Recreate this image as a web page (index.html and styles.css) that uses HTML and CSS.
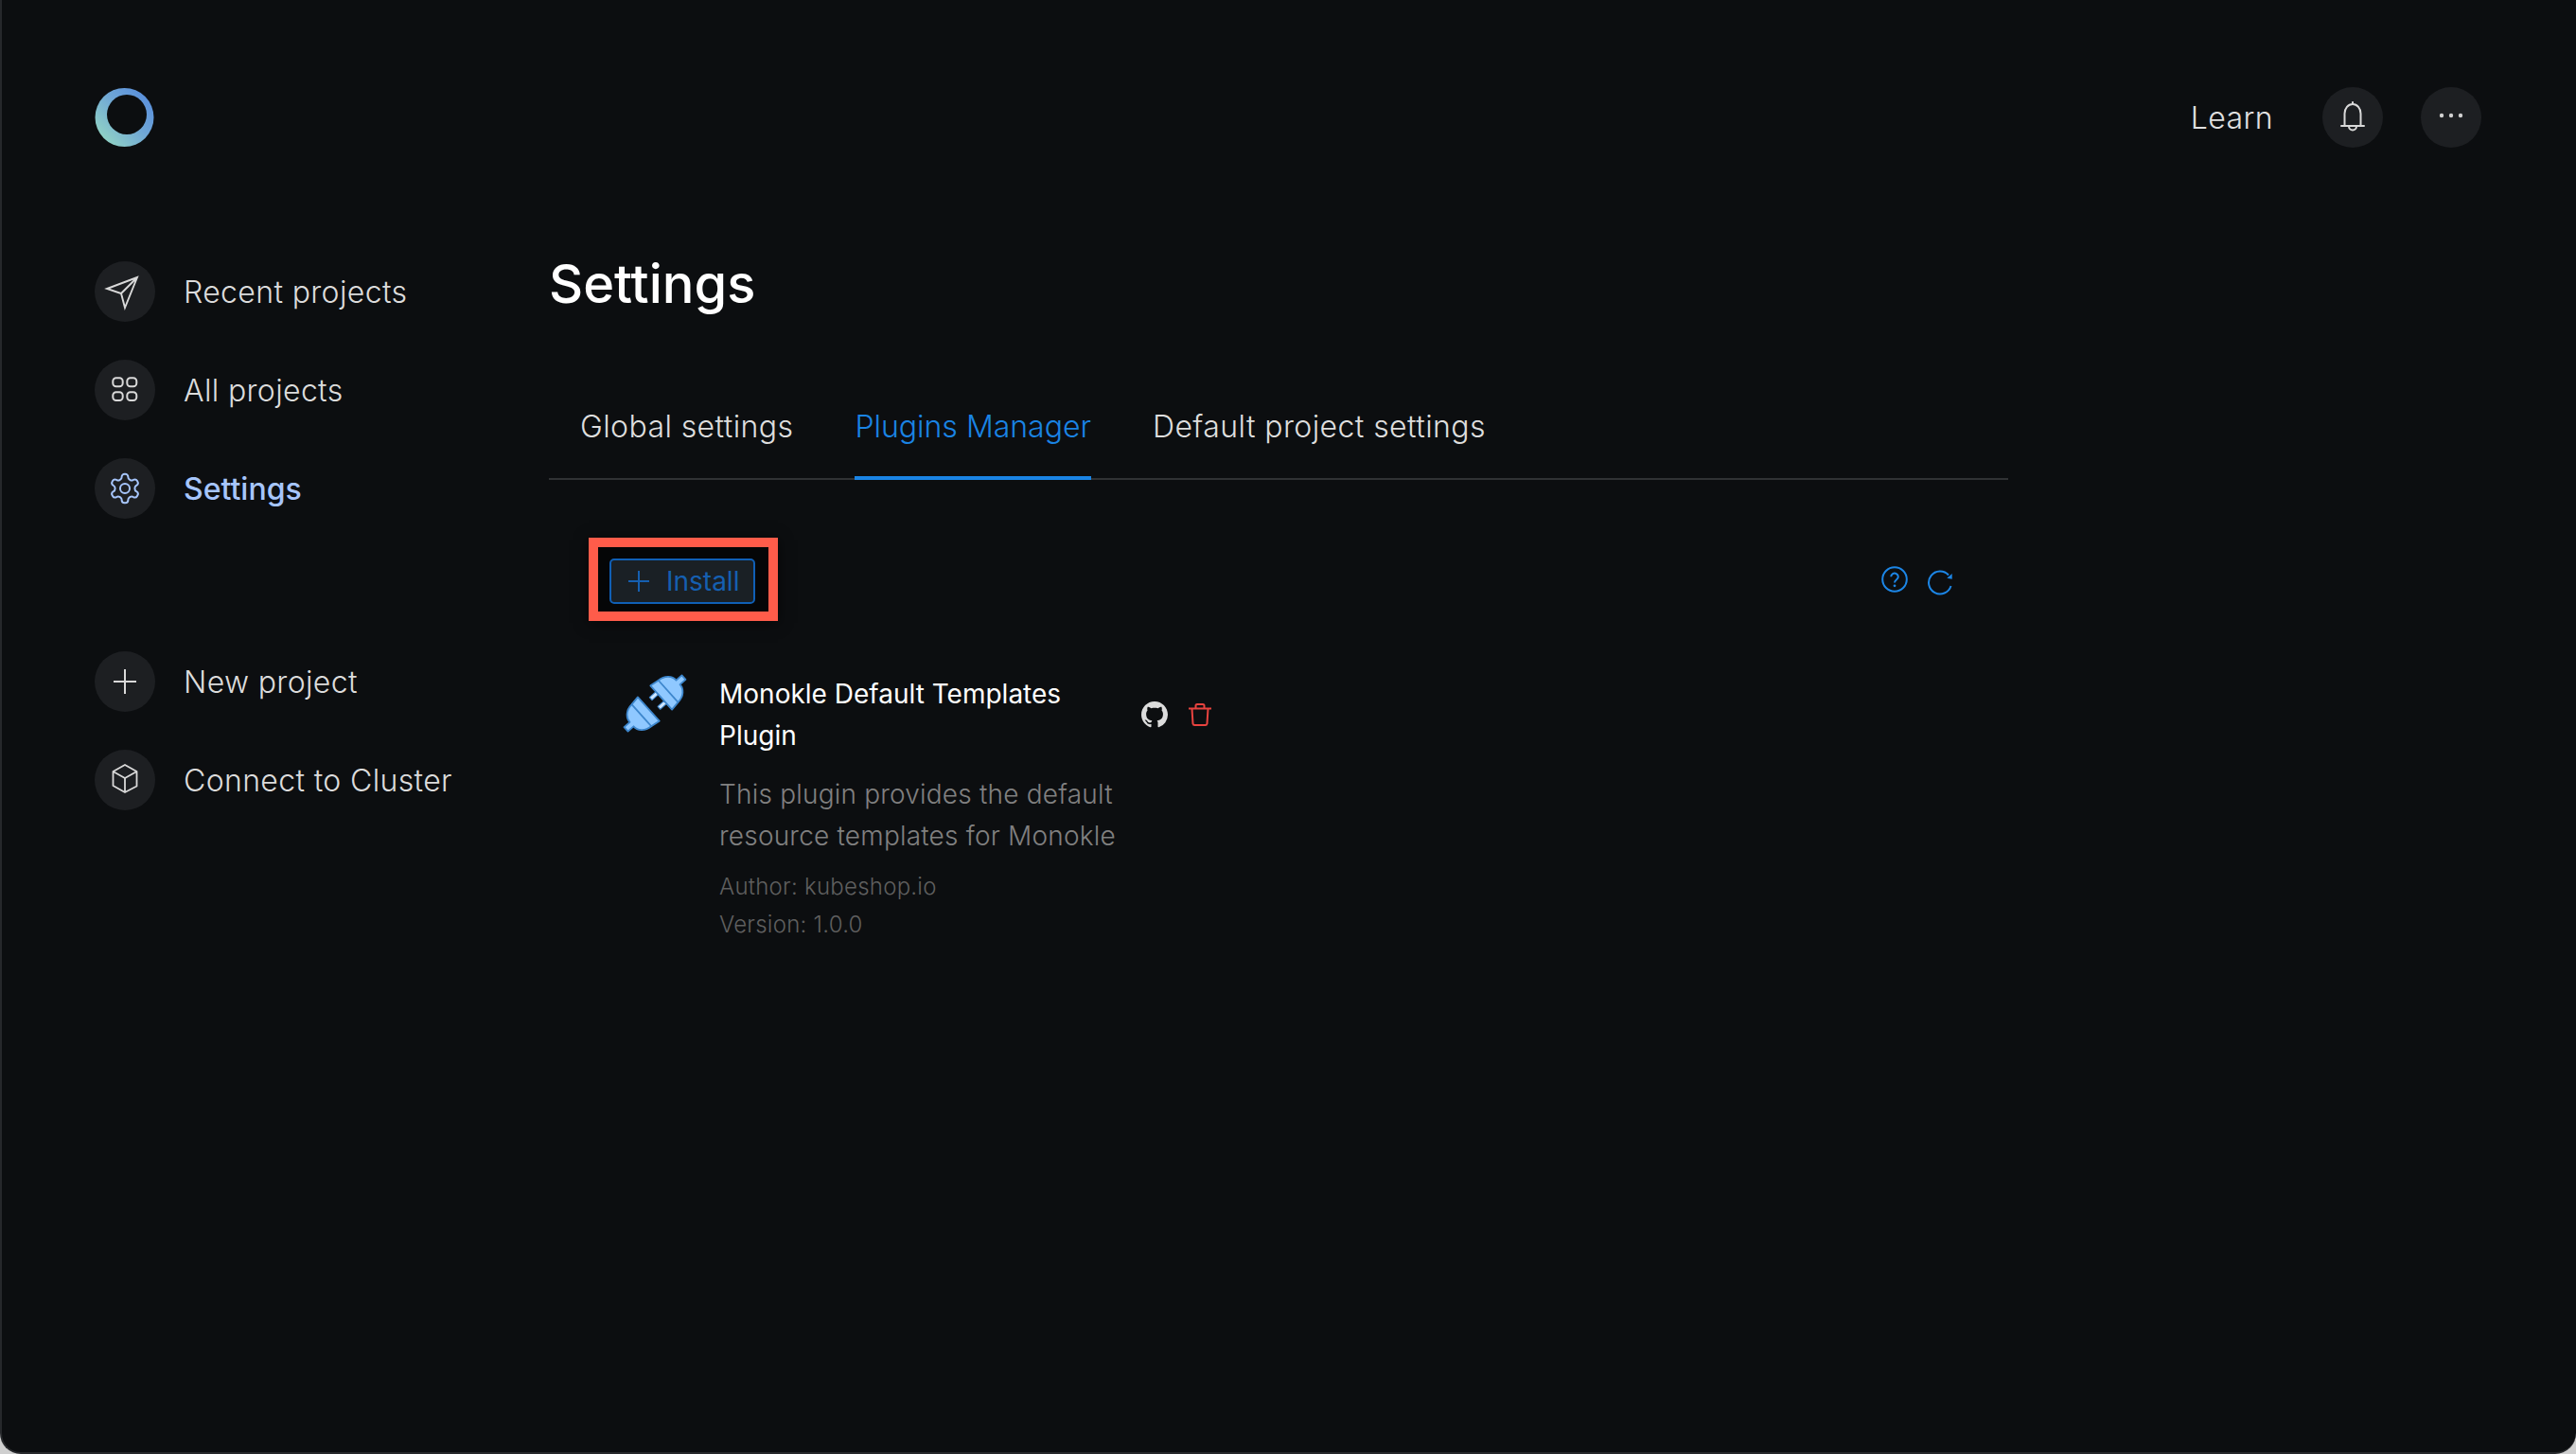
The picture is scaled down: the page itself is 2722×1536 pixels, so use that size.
FILE: index.html
```html
<!DOCTYPE html>
<html lang="en">
<head>
<meta charset="utf-8">
<title>Settings</title>
<link rel="stylesheet" href="styles.css">
</head>
<body>
<div class="window">
  <header class="topbar">
    <svg class="logo" viewBox="0 0 63 62" aria-hidden="true">
      <defs>
        <linearGradient id="logoGrad" x1="0.15" y1="0.85" x2="0.9" y2="0.15">
          <stop offset="0" stop-color="#8fd0c6"/>
          <stop offset="0.55" stop-color="#6fa6d6"/>
          <stop offset="1" stop-color="#5a90dc"/>
        </linearGradient>
      </defs>
      <circle cx="31.5" cy="31" r="31" fill="url(#logoGrad)"/>
      <circle cx="34" cy="28" r="21" fill="#0c0e10"/>
    </svg>
    <div class="topbar-right">
      <span class="learn">Learn</span>
      <span class="round">
        <svg class="ico" viewBox="0 0 32 32"><path d="M16 0v2M7.500 25V12a8.500 10 0 0 1 17 0v13M4 25h24M12 25.500a4 4 0 0 0 8 0" fill="none" stroke="#d9d9d9" stroke-width="2" stroke-linecap="round"/></svg>
      </span>
      <span class="round">
        <svg class="ico" viewBox="0 0 32 32"><g fill="#d0d0d0"><circle cx="6" cy="14" r="2.200"/><circle cx="16" cy="14" r="2.200"/><circle cx="26" cy="14" r="2.200"/></g></svg>
      </span>
    </div>
  </header>

  <div class="layout">
    <aside class="sidebar">
      <nav class="nav-group">
        <a class="nav-item">
          <span class="round">
            <svg class="ico" viewBox="0 0 32 32"><path d="M29 1-3 13l15 5 4 15zM29 1 12 18" fill="none" stroke="#d9d9d9" stroke-width="1.900" stroke-linejoin="miter"/></svg>
          </span>
          <span>Recent projects</span>
        </a>
        <a class="nav-item">
          <span class="round">
            <svg class="ico" viewBox="0 0 32 32"><g fill="none" stroke="#d9d9d9" stroke-width="2"><rect x="3.300" y="3.300" width="10.400" height="9" rx="3.500"/><rect x="18.300" y="3.300" width="10" height="9" rx="3.500"/><rect x="3.300" y="18.300" width="10.400" height="8.700" rx="3.500"/><rect x="18.300" y="18.300" width="10" height="8.700" rx="3.500"/></g></svg>
          </span>
          <span>All projects</span>
        </a>
        <a class="nav-item nav-active">
          <span class="round">
            <svg class="ico" viewBox="1.500 1.500 21 21"><g fill="none" stroke="#a6c5fb" stroke-width="1.300"><path d="M12.220 2h-.44a2 2 0 0 0-2 2v.18a2 2 0 0 1-1 1.730l-.43.25a2 2 0 0 1-2 0l-.15-.08a2 2 0 0 0-2.730.73l-.22.38a2 2 0 0 0 .73 2.730l.15.1a2 2 0 0 1 1 1.720v.51a2 2 0 0 1-1 1.740l-.15.09a2 2 0 0 0-.73 2.730l.22.38a2 2 0 0 0 2.730.73l.15-.08a2 2 0 0 1 2 0l.43.25a2 2 0 0 1 1 1.730V20a2 2 0 0 0 2 2h.44a2 2 0 0 0 2-2v-.18a2 2 0 0 1 1-1.730l.43-.25a2 2 0 0 1 2 0l.15.08a2 2 0 0 0 2.730-.73l.22-.39a2 2 0 0 0-.73-2.730l-.15-.08a2 2 0 0 1-1-1.740v-.5a2 2 0 0 1 1-1.740l.15-.09a2 2 0 0 0 .73-2.730l-.22-.38a2 2 0 0 0-2.730-.73l-.15.08a2 2 0 0 1-2 0l-.43-.25a2 2 0 0 1-1-1.730V4a2 2 0 0 0-2-2z"/><circle cx="12" cy="12" r="3.300"/></g></svg>
          </span>
          <span>Settings</span>
        </a>
      </nav>
      <nav class="nav-group">
        <a class="nav-item">
          <span class="round">
            <svg class="ico" viewBox="0 0 32 32"><path d="M16 3v26M4 16h24" fill="none" stroke="#d9d9d9" stroke-width="2"/></svg>
          </span>
          <span>New project</span>
        </a>
        <a class="nav-item">
          <span class="round">
            <svg class="ico" viewBox="0 0 32 32"><path d="M16 0 28.500 7v15.500L16 29 3.500 22V7zM3.500 7 16 14l12.500-7M16 14v15" fill="none" stroke="#d9d9d9" stroke-width="1.800" stroke-linejoin="round"/></svg>
          </span>
          <span>Connect to Cluster</span>
        </a>
      </nav>
    </aside>

    <main class="content">
      <h1 class="title">Settings</h1>
      <div class="tabs">
        <span class="tab">Global settings</span>
        <span class="tab tab-active">Plugins Manager</span>
        <span class="tab">Default project settings</span>
      </div>

      <div class="toolbar">
        <div class="callout">
          <button class="install">
            <svg class="plus" viewBox="0 0 22 22"><path d="M11 0v22M0 11h22" fill="none" stroke="#155fb0" stroke-width="2"/></svg>
            <span>Install</span>
          </button>
        </div>
        <div class="tool-icons">
          <svg class="tool-help" viewBox="0 0 28 28"><g fill="none" stroke="#1c86e6" stroke-width="2"><circle cx="14" cy="14" r="12.800"/><path d="M10.200 11.200a3.800 3.600 0 1 1 5.900 3c-1.300.9-2.100 1.600-2.100 3.200"/></g><circle cx="14" cy="20.800" r="1.400" fill="#1c86e6"/></svg>
          <svg class="tool-refresh" viewBox="0 0 28 28"><path d="M23 6.500A12 12 0 1 0 25.500 18" fill="none" stroke="#1c86e6" stroke-width="2"/><path d="M26.700 5v5.700l-5.400-1z" fill="#1c86e6"/></svg>
        </div>
      </div>

      <article class="plugin">
        <svg class="plug" viewBox="-32 -32 64 64" aria-hidden="true">
          <g transform="rotate(-42)" fill="#8fc8ff" stroke="#3d86cc" stroke-width="1.800" stroke-linejoin="round">
            <g>
              <path d="M0-8.500H9v4H0zM0 4.500H9v4H0z" fill="#cfe6ff" stroke-width="1"/>
              <path d="M9-17 19-15.500C28-15 33-9 33-3H41V3H33C33 9 28 15 19 15.500L9 17Z"/>
              <path d="M19-15.500V15.500" fill="none"/>
            </g>
            <g transform="rotate(180)">
              <path d="M9-17 19-15.500C28-15 33-9 33-3H41V3H33C33 9 28 15 19 15.500L9 17Z"/>
              <path d="M19-15.500V15.500" fill="none"/>
            </g>
          </g>
        </svg>
        <div class="plugin-body">
          <div class="plugin-head">
            <div class="plugin-name">Monokle Default Templates Plugin</div>
            <div class="plugin-actions">
              <svg class="gh" viewBox="0 0 16 16"><path fill="#dcdcdc" d="M8 0C3.580 0 0 3.580 0 8c0 3.540 2.290 6.530 5.470 7.590.4.07.55-.17.55-.38 0-.19-.01-.82-.01-1.490-2.010.37-2.530-.49-2.690-.94-.09-.23-.48-.94-.82-1.130-.28-.15-.68-.52-.01-.53.63-.01 1.080.58 1.230.82.72 1.210 1.870.87 2.330.66.07-.52.28-.87.51-1.070-1.780-.2-3.640-.89-3.640-3.950 0-.87.31-1.590.82-2.150-.08-.2-.36-1.020.08-2.120 0 0 .67-.21 2.200.82.64-.18 1.320-.27 2-.27.68 0 1.360.09 2 .27 1.530-1.040 2.200-.82 2.200-.82.44 1.100.16 1.920.08 2.120.51.56.82 1.270.82 2.150 0 3.070-1.870 3.750-3.650 3.950.29.25.54.73.54 1.480 0 1.070-.01 1.930-.01 2.200 0 .21.15.46.55.38A8.013 8.013 0 0016 8c0-4.420-3.580-8-8-8z"/></svg>
              <svg class="trash" viewBox="0 0 24 24"><path d="M0 5.500h24M3.500 5.500l1 16a2 2 0 0 0 2 1.500h11a2 2 0 0 0 2-1.500l1-16M7.500 5.500V2.500a1.500 1.500 0 0 1 1.500-1.500h6a1.500 1.500 0 0 1 1.500 1.500v3" fill="none" stroke="#e8433f" stroke-width="2"/></svg>
            </div>
          </div>
          <p class="plugin-desc">This plugin provides the default resource templates for Monokle</p>
          <div class="plugin-meta">Author: kubeshop.io</div>
          <div class="plugin-meta">Version: 1.0.0</div>
        </div>
      </article>
    </main>
  </div>
</div>
</body>
</html>
```

FILE: styles.css
```css
* { box-sizing: border-box; }
html, body { margin: 0; padding: 0; }
body {
  width: 2722px;
  height: 1536px;
  background: #cfcfcf;
  font-family: Inter, "Noto Sans", sans-serif;
  overflow: hidden;
}
.window {
  width: 2722px;
  height: 1536px;
  background: #0c0e10;
  border: 2px solid #26282b;
  border-top: 0;
  border-right-width: 0;
  border-radius: 0 0 22px 22px;
  padding: 92px 98px 0;
  color: #dbdbdb;
}
.topbar {
  display: flex;
  justify-content: space-between;
  align-items: center;
  height: 64px;
}
.logo { width: 63px; height: 62px; display: block; }
.topbar-right { display: flex; align-items: center; gap: 40px; padding-right: 2px; }
.learn { font-size: 32px; font-weight: 300; letter-spacing: 0.4px; margin-right: 12px; color: #e0e0e0; }
.round {
  width: 64px;
  height: 64px;
  flex: none;
  border-radius: 50%;
  background: #1d1f22;
  display: flex;
  align-items: center;
  justify-content: center;
}
.ico { width: 32px; height: 32px; display: block; overflow: visible; }

.layout { display: flex; }
.sidebar { width: 480px; flex: none; padding-top: 120px; display: flex; flex-direction: column; gap: 140px; }
.nav-group { display: flex; flex-direction: column; gap: 40px; }
.nav-item {
  display: flex;
  align-items: center;
  gap: 30px;
  height: 64px;
  font-size: 32px;
  font-weight: 300;
  letter-spacing: 0.35px;
  color: #dcdcdc;
}
.nav-active { color: #a6c5fb; font-weight: 500; letter-spacing: 0; }

.content { width: 1542px; flex: none; padding-top: 100px; }
.title {
  margin: 0;
  font-size: 56px;
  font-weight: 500;
  line-height: 88px;
  color: #fff;
}
.tabs {
  display: flex;
  gap: 65px;
  margin-top: 62px;
  padding-left: 33px;
  border-bottom: 2px solid #303234;
  height: 101px;
  align-items: flex-end;
}
.tab {
  font-size: 32px;
  font-weight: 300;
  letter-spacing: 0.4px;
  line-height: 48px;
  padding-bottom: 28px;
  margin-bottom: -2px;
  color: #dedede;
  border-bottom: 4px solid transparent;
}
.tab-active { color: #1a84e4; letter-spacing: 0; border-bottom-color: #1a84e4; }

.toolbar {
  display: flex;
  justify-content: space-between;
  align-items: center;
  margin-top: 61px;
  padding: 0 58px 0 42px;
}
.callout {
  border: 10px solid #ff5c4a;
  background: #050607;
  padding: 12px 14px 8px 12px;
  box-shadow: 0 2px 14px rgba(0, 0, 0, 0.6);
}
.install {
  display: flex;
  align-items: center;
  gap: 18px;
  height: 48px;
  width: 154px;
  padding: 0 0 0 18px;
  background: #1a2025;
  border: 2px solid #105fb5;
  border-radius: 5px;
  color: #155fb0;
  font: 400 28px Inter, sans-serif;
}
.plus { width: 22px; height: 22px; flex: none; }
.tool-icons { display: flex; align-items: flex-start; gap: 20px; margin-top: 3px; }
.tool-help { width: 28px; height: 28px; }
.tool-refresh { width: 28px; height: 28px; margin-top: 3px; }

.plugin { display: flex; gap: 36px; margin-top: 55px; padding-left: 80px; }
.plug { width: 64px; height: 64px; flex: none; display: block; overflow: visible; }
.plugin-body { width: 520px; }
.plugin-head { display: flex; align-items: center; }
.plugin-name {
  width: 436px;
  font-size: 28px;
  font-weight: 400;
  line-height: 44px;
  color: #fff;
}
.plugin-actions { display: flex; align-items: center; gap: 22px; margin-left: 10px; }
.gh { width: 28px; height: 28px; }
.trash { width: 24px; height: 24px; }
.plugin-desc {
  margin: 18px 0 12px;
  width: 436px;
  font-size: 28px;
  font-weight: 300;
  letter-spacing: 0.2px;
  line-height: 44px;
  color: #808080;
}
.plugin-meta {
  font-size: 24px;
  font-weight: 300;
  letter-spacing: 0.25px;
  line-height: 40px;
  color: #5f5f5f;
}
```
